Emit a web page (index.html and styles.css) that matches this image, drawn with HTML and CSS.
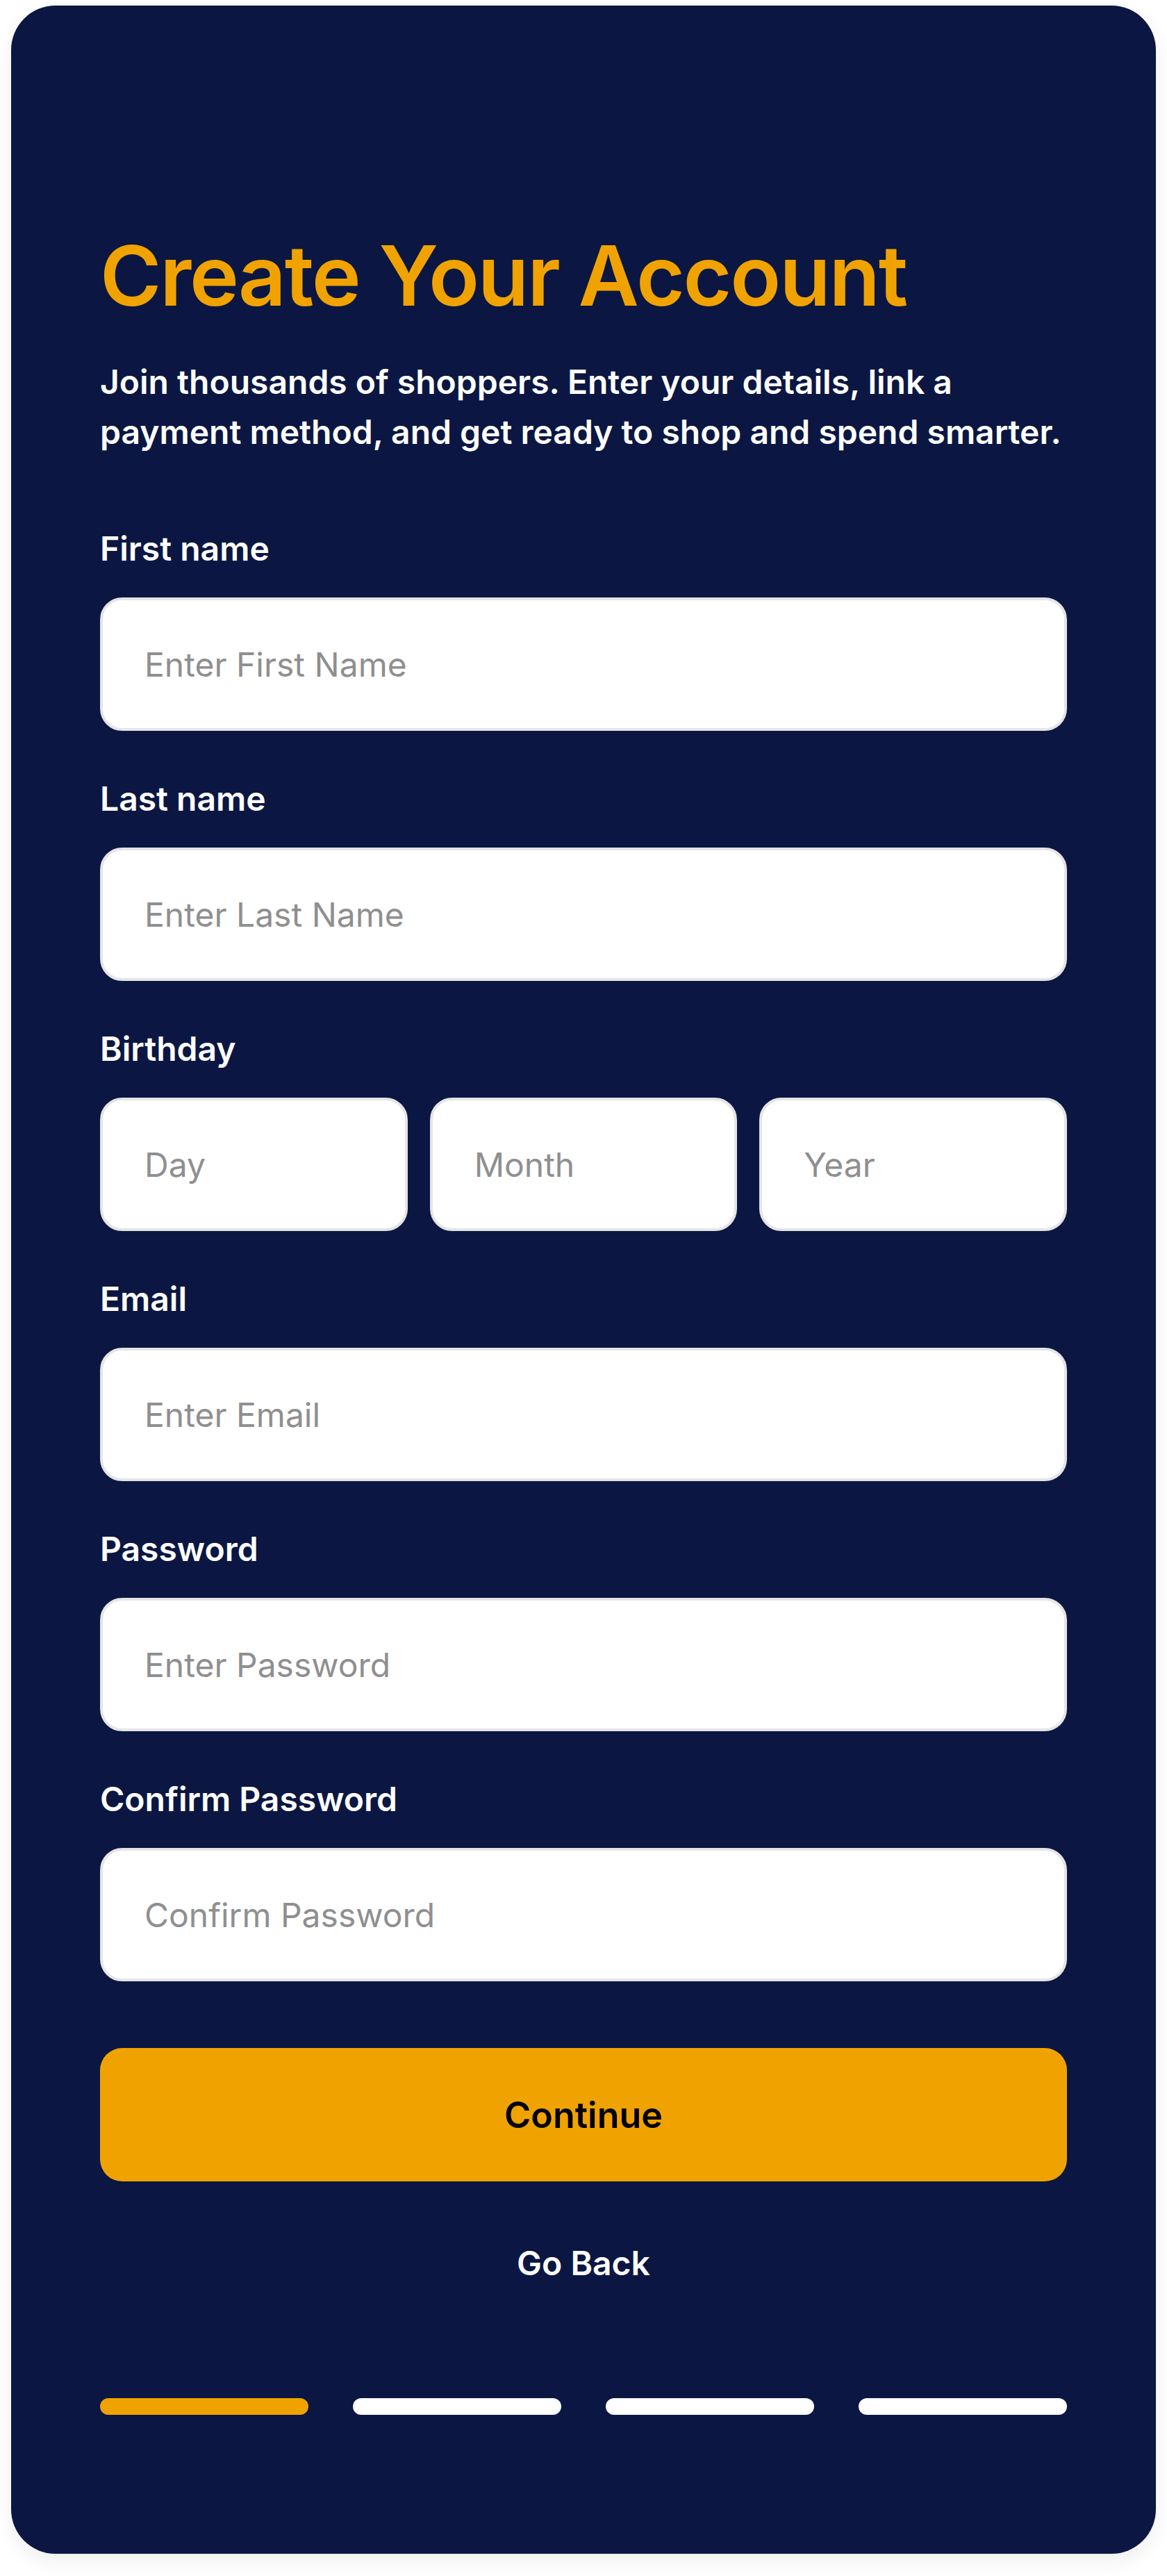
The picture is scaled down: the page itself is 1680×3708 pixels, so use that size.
FILE: index.html
```html
<!DOCTYPE html>
<html lang="en">
<head>
<meta charset="utf-8">
<title>Create Your Account</title>
<link rel="stylesheet" href="styles.css">
</head>
<body>
<div class="page">
  <main class="card">
    <h1 class="title">Create Your Account</h1>
    <p class="intro">Join thousands of shoppers. Enter your details, link a payment method, and get ready to shop and spend smarter.</p>
    <form class="form">
      <div class="field">
        <label class="label" for="fn">First name</label>
        <input class="input" id="fn" type="text" placeholder="Enter First Name">
      </div>
      <div class="field">
        <label class="label" for="ln">Last name</label>
        <input class="input" id="ln" type="text" placeholder="Enter Last Name">
      </div>
      <div class="field">
        <label class="label" for="bd">Birthday</label>
        <div class="birthday">
          <input class="input" id="bd" type="text" placeholder="Day">
          <input class="input" type="text" placeholder="Month">
          <input class="input" type="text" placeholder="Year">
        </div>
      </div>
      <div class="field">
        <label class="label" for="em">Email</label>
        <input class="input" id="em" type="text" placeholder="Enter Email">
      </div>
      <div class="field">
        <label class="label" for="pw">Password</label>
        <input class="input" id="pw" type="text" placeholder="Enter Password">
      </div>
      <div class="field">
        <label class="label" for="cpw">Confirm Password</label>
        <input class="input" id="cpw" type="text" placeholder="Confirm Password">
      </div>
      <button class="continue" type="button">Continue</button>
      <a class="back" href="#">Go Back</a>
    </form>
    <div class="steps">
      <span class="step active"></span>
      <span class="step"></span>
      <span class="step"></span>
      <span class="step"></span>
    </div>
  </main>
</div>
</body>
</html>
```

FILE: styles.css
```css
* { box-sizing: border-box; }

html, body {
  margin: 0;
  padding: 0;
  background: #ffffff;
}

body {
  font-family: Inter, "Noto Sans", "Liberation Sans", sans-serif;
}

.page {
  padding: 8px 16px 32px;
}

.card {
  background: #0b1742;
  border-radius: 64px;
  padding: 317px 128px 200px;
  box-shadow: 0 10px 28px rgba(0, 0, 0, 0.07);
  display: flex;
  flex-direction: column;
}

.title {
  margin: 0;
  color: #f0a300;
  font-size: 120px;
  line-height: 144px;
  font-weight: 600;
  letter-spacing: -2.2px;
}

.intro {
  margin: 45px 0 0;
  color: #ffffff;
  font-size: 48px;
  line-height: 72px;
  font-weight: 600;
}

.form {
  margin-top: 96px;
  display: flex;
  flex-direction: column;
}

.field {
  display: flex;
  flex-direction: column;
  gap: 34px;
  margin-bottom: 62px;
}

.field:last-of-type {
  margin-bottom: 0;
}

.label {
  color: #ffffff;
  font-size: 48px;
  line-height: 72px;
  font-weight: 600;
}

.input {
  display: block;
  width: 100%;
  height: 192px;
  margin: 0;
  padding: 0 60px;
  background: #ffffff;
  border: 4px solid #e5e5e5;
  border-radius: 32px;
  font-family: Inter, "Noto Sans", "Liberation Sans", sans-serif;
  font-size: 48px;
  font-weight: 400;
  color: #222222;
  outline: none;
}

.input::placeholder {
  color: #8f8f8f;
  opacity: 1;
}

.birthday {
  display: grid;
  grid-template-columns: 1fr 1fr 1fr;
  gap: 32px;
}

.continue {
  margin-top: 96px;
  height: 192px;
  width: 100%;
  border: none;
  border-radius: 32px;
  background: #f0a300;
  color: #000000;
  font-family: Inter, "Noto Sans", "Liberation Sans", sans-serif;
  font-size: 52px;
  font-weight: 600;
  cursor: pointer;
}

.back {
  margin-top: 82px;
  align-self: center;
  color: #ffffff;
  text-decoration: none;
  font-size: 48px;
  line-height: 72px;
  font-weight: 600;
}

.steps {
  margin-top: 158px;
  display: grid;
  grid-template-columns: repeat(4, 1fr);
  gap: 64px;
}

.step {
  height: 24px;
  border-radius: 12px;
  background: #ffffff;
}

.step.active {
  background: #f0a300;
}
```
